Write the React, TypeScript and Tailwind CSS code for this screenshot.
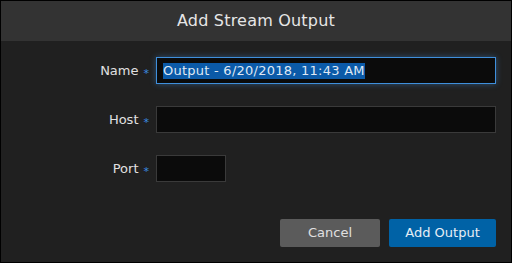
export default function App() {
  const font = { fontFamily: '"DejaVu Sans", Verdana, sans-serif' };
  const Star = () => (
    <span className="text-[#3b8be0] text-[11px] ml-[5px] leading-none relative top-[3px]">*</span>
  );
  return (
    <div className="w-[512px] h-[263px] bg-black p-px" style={font}>
      <div className="flex flex-col w-full h-full bg-[#202020]">
        <div className="h-[40px] bg-[#333333] flex items-center justify-center text-[16px] text-[#e6e6e6] tracking-[0.2px]">
          Add Stream Output
        </div>
        <div className="flex flex-col pt-[16px] gap-[22px] text-[13px] text-[#e0e0e0]">
          <div className="flex items-center">
            <div className="w-[155px] flex justify-end items-center pr-[7px]">
              <span>Name</span>
              <Star />
            </div>
            <div className="w-[340px] h-[27px] border border-[#3f8fdc] bg-[#0b0b0b] shadow-[0_0_6px_rgba(63,143,220,0.45)] flex items-center px-[6px]">
              <span className="bg-[#0b5aa8] text-[#dfe8f4] leading-[16px] tracking-[0.25px]">Output - 6/20/2018, 11:43 AM</span>
            </div>
          </div>
          <div className="flex items-center">
            <div className="w-[155px] flex justify-end items-center pr-[7px]">
              <span>Host</span>
              <Star />
            </div>
            <div className="w-[340px] h-[27px] border border-[#3a3a3a] bg-[#0b0b0b]" />
          </div>
          <div className="flex items-center">
            <div className="w-[155px] flex justify-end items-center pr-[7px]">
              <span>Port</span>
              <Star />
            </div>
            <div className="w-[70px] h-[27px] border border-[#3a3a3a] bg-[#0b0b0b]" />
          </div>
        </div>
        <div className="flex justify-end gap-[9px] pr-[15px] mt-[37px]">
          <button className="w-[100px] h-[28px] bg-[#5b5b5b] rounded-[2px] text-[13px] text-[#e0e0e0]">Cancel</button>
          <button className="w-[107px] h-[28px] bg-[#0062a6] rounded-[2px] text-[13px] text-[#e6eef6]">Add Output</button>
        </div>
      </div>
    </div>
  );
}
